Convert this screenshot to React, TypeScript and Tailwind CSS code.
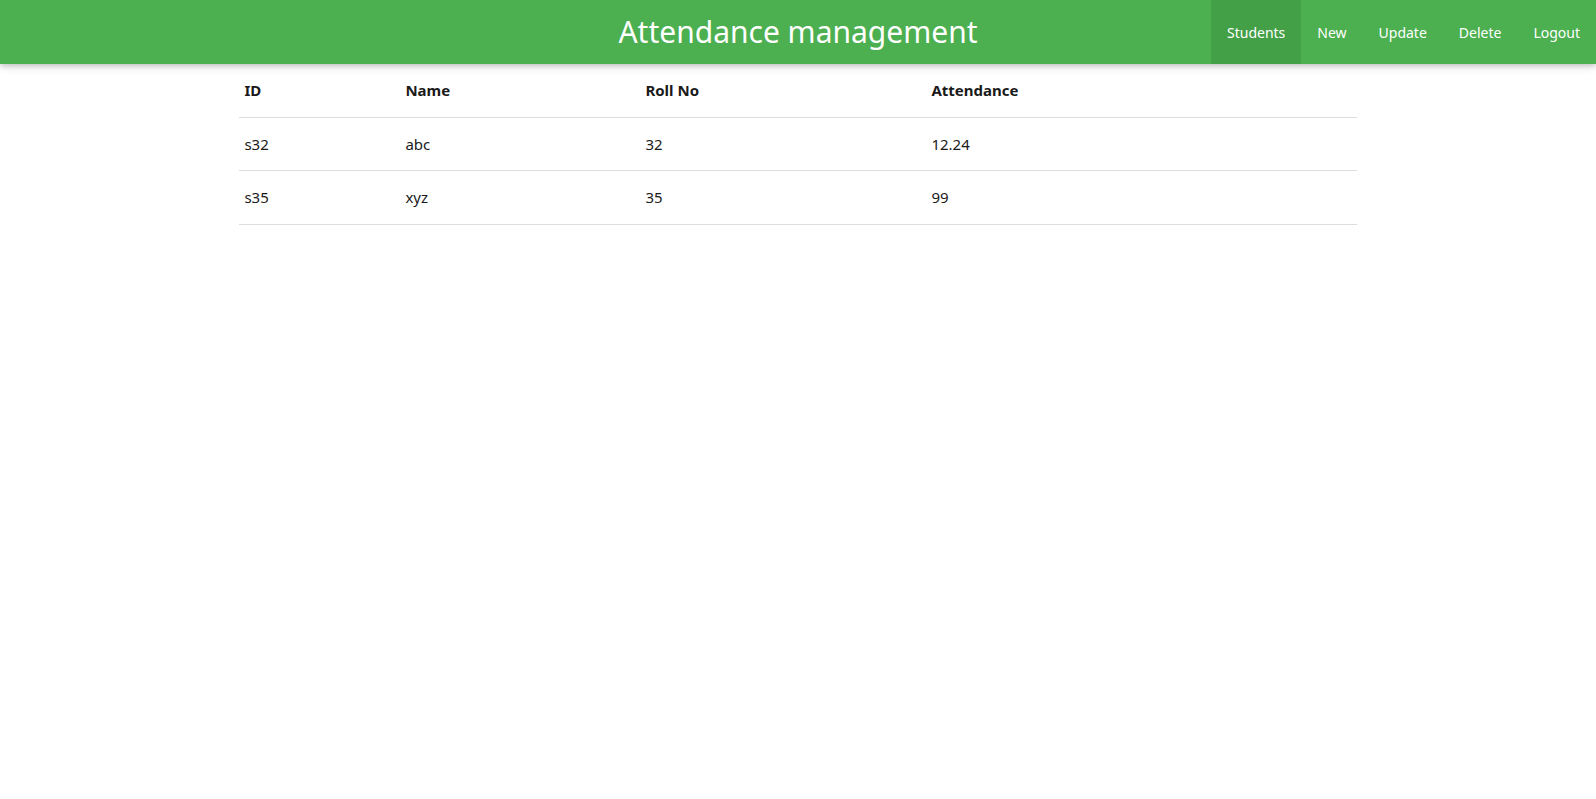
import React from "react";

const rows = [
  { id: "s32", name: "abc", roll: "32", att: "12.24" },
  { id: "s35", name: "xyz", roll: "35", att: "99" },
];

const nav = ["Students", "New", "Update", "Delete", "Logout"];

export default function App() {
  return (
    <div
      className="min-h-[799px] bg-white text-[#1a1a1a]"
      style={{ fontFamily: '"Noto Sans", "Open Sans", sans-serif' }}
    >
      <header className="grid h-[64px] grid-cols-[1fr_auto_1fr] bg-[#4caf50] text-white shadow-[0_2px_5px_rgba(0,0,0,0.16),0_2px_10px_rgba(0,0,0,0.12)]">
        <div />
        <h1 className="flex items-center text-[30px] font-normal leading-none">
          Attendance management
        </h1>
        <nav className="flex justify-end">
          {nav.map((n, i) => (
            <a
              key={n}
              className={
                "flex h-full items-center px-[16px] text-[14px] " +
                (i === 0 ? "bg-[#43a047]" : "")
              }
            >
              {n}
            </a>
          ))}
        </nav>
      </header>
      <div className="mx-auto w-[70%]">
        <table className="w-full table-fixed border-collapse text-left text-[15px] leading-[1.5]">
          <colgroup>
            <col className="w-[161px]" />
            <col className="w-[240px]" />
            <col className="w-[286px]" />
            <col />
          </colgroup>
          <thead>
            <tr className="border-b border-[#ddd]">
              <th className="py-[15px] pl-[5px] font-bold">ID</th>
              <th className="py-[15px] pl-[5px] font-bold">Name</th>
              <th className="py-[15px] pl-[5px] font-bold">Roll No</th>
              <th className="py-[15px] pl-[5px] font-bold">Attendance</th>
            </tr>
          </thead>
          <tbody>
            {rows.map((r) => (
              <tr key={r.id} className="border-b border-[#ddd]">
                <td className="py-[15px] pl-[5px]">{r.id}</td>
                <td className="py-[15px] pl-[5px]">{r.name}</td>
                <td className="py-[15px] pl-[5px]">{r.roll}</td>
                <td className="py-[15px] pl-[5px]">{r.att}</td>
              </tr>
            ))}
          </tbody>
        </table>
      </div>
    </div>
  );
}
